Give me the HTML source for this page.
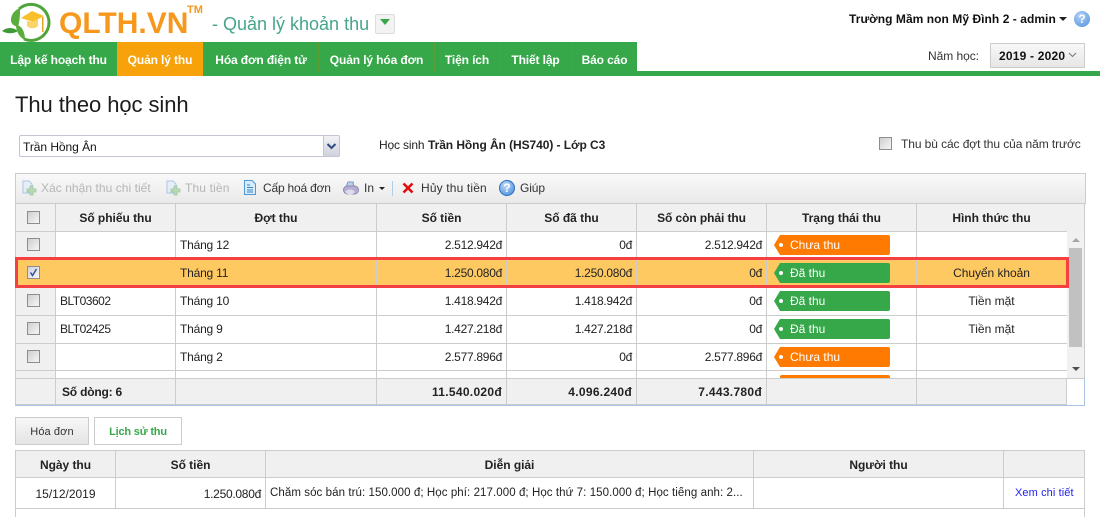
<!DOCTYPE html>
<html lang="vi"><head><meta charset="utf-8"><title>QLTH.VN</title>
<style>
html,body{margin:0;padding:0;width:1100px;height:517px;overflow:hidden;background:#fff}
body{position:relative;font:12px "Liberation Sans","DejaVu Sans",sans-serif;color:#222}
.a{position:absolute;white-space:nowrap}
.b{position:absolute}
.tab{position:absolute;top:42px;height:34px;line-height:36px;background:#36a84a;color:#fff;font-weight:bold;text-align:center;letter-spacing:-.12px}
.th{position:absolute;font-weight:bold;text-align:center;color:#222;letter-spacing:-.03px}
.n{position:absolute;text-align:center;color:#222;white-space:nowrap}
.r{position:absolute;text-align:right;letter-spacing:-.28px}
.f{position:absolute;text-align:right;font-weight:bold;letter-spacing:.3px}
.hl{position:absolute;height:1px;background:#ccc}
.vl{position:absolute;width:1px;background:#ccc}
.cb{position:absolute;left:27px;width:11px;height:11px;border:1px solid #8e8e8e;background:linear-gradient(135deg,#cfcfcf,#f6f6f6)}
.tag{position:absolute;left:780px;width:110px;height:20px;border-radius:0 2px 2px 0;color:#fff;line-height:20px}
.tag:before{content:"";position:absolute;left:-6px;top:0;border-right:6px solid;border-right-color:inherit;border-top:10px solid transparent;border-bottom:10px solid transparent}
.tag:after{content:"";position:absolute;left:-1px;top:8px;width:4px;height:4px;border-radius:50%;background:#fff}
.o{background:#ff7a00;border-color:#ff7a00}.g{background:#36a84a;border-color:#36a84a}
.tag span{position:absolute;left:10px}
.t{position:absolute;left:180px;letter-spacing:-.2px}
.c{position:absolute;left:60px;letter-spacing:-.5px}
</style></head><body>

<!-- logo -->
<svg class="b" style="left:0;top:0" width="60" height="44" viewBox="0 0 60 44">
<path d="M19 9A18 18 0 1 1 24 39" fill="none" stroke="#4fa53a" stroke-width="3"/>
<path d="M11 20C11 14 15 10 20 8C20 14 20 20 18 27C14 26 11 24 11 20Z" fill="#58ad3c"/>
<path d="M2 31C7 27 13 27 18 31C13 34 7 34 2 31Z" fill="#3f9a35"/>
<path d="M16 25C21 25 25 31 25 40C20 38 16 32 16 25Z" fill="#58ad3c"/>
<path d="M21 18L32 11L44 16L33 22Z" fill="#f8c02c"/>
<path d="M27 21V26C30 29 35 29 38 26V19L33 22Z" fill="#f9d469"/>
<rect x="42" y="17" width="1.500" height="15" fill="#e5a524"/>
</svg>
<div class="a" style="left:59px;top:7px;font-size:30px;line-height:34px;font-weight:bold;color:#f7981d">QLTH.VN</div>
<div class="a" style="left:187px;top:4px;font-size:11px;line-height:12px;font-weight:bold;color:#f7981d">TM</div>
<div class="a" style="left:212px;top:13px;font-size:18px;line-height:22px;color:#46a58c">- Quản lý khoản thu</div>
<div class="b" style="left:375px;top:14px;width:18px;height:18px;border:1px solid #ddd;border-radius:2px;background:#f3f3f3"></div>
<div class="b" style="left:380px;top:19px;border-top:6px solid #36a84a;border-left:5px solid transparent;border-right:5px solid transparent"></div>

<div class="a" style="left:849px;top:12px;line-height:14px;font-weight:bold;color:#111;letter-spacing:.05px">Trường Mầm non Mỹ Đình 2 - admin</div>
<div class="b" style="left:1059px;top:17px;border-top:4px solid #222;border-left:4px solid transparent;border-right:4px solid transparent"></div>
<div class="a" style="left:1074px;top:11px;width:16px;height:16px;border-radius:50%;background:radial-gradient(circle at 40% 30%,#b5d3f5,#4c8fdc);color:#fff;font-weight:bold;text-align:center;line-height:16px">?</div>

<!-- nav -->
<div class="b" style="left:0;top:71px;width:1100px;height:5px;background:#36a84a"></div>
<div class="b" style="left:0;top:42px;width:637px;height:30px;background:#5d9f33"></div>
<div class="tab" style="left:0;width:117px">Lập kế hoạch thu</div>
<div class="tab" style="left:117px;width:86px;background:#f7a20a">Quản lý thu</div>
<div class="tab" style="left:204px;width:114px">Hóa đơn điện tử</div>
<div class="tab" style="left:319px;width:115px">Quản lý hóa đơn</div>
<div class="tab" style="left:435px;width:64px">Tiện ích</div>
<div class="tab" style="left:500px;width:71px">Thiết lập</div>
<div class="tab" style="left:572px;width:65px">Báo cáo</div>

<div class="a" style="left:928px;top:49px;line-height:14px;color:#333;letter-spacing:-.05px">Năm học:</div>
<div class="b" style="left:990px;top:43px;width:93px;height:23px;border:1px solid #ccc;background:linear-gradient(#f8f8f8,#e6e6e6)"></div>
<div class="a" style="left:999px;top:49px;line-height:14px;font-weight:bold;color:#111;letter-spacing:.2px">2019 - 2020</div>
<svg class="b" style="left:1068px;top:52px" width="9" height="6"><path d="M1 1L4.500 4.500L8 1" fill="none" stroke="#777"/></svg>

<!-- title -->
<div class="a" style="left:15px;top:92px;font-size:22px;line-height:26px;color:#1c1c1c;letter-spacing:-.08px">Thu theo học sinh</div>

<div class="b" style="left:19px;top:135px;width:319px;height:20px;border:1px solid #c5c5d2;border-radius:2px"></div>
<div class="b" style="left:323px;top:136px;width:15px;height:20px;background:linear-gradient(#f2f2f6,#cfd2dc);border-left:1px solid #c5c5d2"></div>
<svg class="b" style="left:326px;top:143px" width="11" height="7"><path d="M1.500 1L5.500 5L9.500 1" fill="none" stroke="#2d4a80" stroke-width="2"/></svg>
<div class="a" style="left:23px;top:140px;line-height:14px;color:#111;letter-spacing:-.05px">Trần Hồng Ân</div>

<div class="a" style="left:379px;top:138px;line-height:14px;color:#222;letter-spacing:-.17px">Học sinh</div>
<div class="a" style="left:428px;top:138px;line-height:14px;color:#222;font-weight:bold;letter-spacing:-.07px">Trần Hồng Ân (HS740) - Lớp C3</div>
<div class="b" style="left:879px;top:137px;width:11px;height:11px;border:1px solid #8e8e8e;background:linear-gradient(135deg,#cfcfcf,#f6f6f6)"></div>
<div class="a" style="left:901px;top:137px;line-height:14px;letter-spacing:-.09px;color:#333">Thu bù các đợt thu của năm trước</div>

<!-- toolbar -->
<div class="b" style="left:15px;top:173px;width:1069px;height:30px;border:1px solid #ccc;border-bottom:0;background:linear-gradient(#f9f9f9,#e9e9e9)"></div>
<svg class="b" style="left:21px;top:180px;opacity:.55" width="16" height="16"><path d="M2 1H8L11 4V13H2Z" fill="#dcecfa" stroke="#6aa6dc"/><path d="M9 6H12V9H15V12H12V15H9V12H6V9H9Z" fill="#8bc98a" stroke="#5a9a5a" stroke-width=".7"/></svg>
<div class="a" style="left:41px;top:181px;line-height:14px;color:#b5b5b5;letter-spacing:.05px">Xác nhận thu chi tiết</div>
<svg class="b" style="left:165px;top:180px;opacity:.55" width="16" height="16"><path d="M2 1H8L11 4V13H2Z" fill="#dcecfa" stroke="#6aa6dc"/><path d="M9 6H12V9H15V12H12V15H9V12H6V9H9Z" fill="#8bc98a" stroke="#5a9a5a" stroke-width=".7"/></svg>
<div class="a" style="left:185px;top:181px;line-height:14px;color:#b5b5b5;letter-spacing:.15px">Thu tiền</div>
<svg class="b" style="left:243px;top:180px" width="14" height="16"><path d="M1.500 .5H9L12.500 4V14.500H1.500Z" fill="#d8ecfb" stroke="#4b9bdc"/><path d="M4 5H7M4 7.500H10M4 10H10M4 12H10" stroke="#3a86c8"/></svg>
<div class="a" style="left:263px;top:181px;line-height:14px;color:#333;letter-spacing:-.2px">Cấp hoá đơn</div>
<svg class="b" style="left:343px;top:181px" width="16" height="15"><path d="M3 6L5 1H10L11 6Z" fill="#b9d2ef" stroke="#7e96bc"/><rect x=".5" y="5" width="15" height="8" rx="4" fill="#b6aed2" stroke="#8c89ad"/><ellipse cx="7" cy="11" rx="4.500" ry="2.500" fill="#dcdcec"/></svg>
<div class="a" style="left:364px;top:181px;line-height:14px;color:#333">In</div>
<div class="b" style="left:379px;top:187px;border-top:3px solid #222;border-left:3px solid transparent;border-right:3px solid transparent"></div>
<div class="b" style="left:392px;top:181px;width:1px;height:15px;background:#aecde8"></div>
<svg class="b" style="left:402px;top:182px" width="12" height="12"><path d="M1.500 1.500L10.500 10.500M10.500 1.500L1.500 10.500" stroke="#e01010" stroke-width="2.600"/></svg>
<div class="a" style="left:421px;top:181px;line-height:14px;color:#333;letter-spacing:.15px">Hủy thu tiền</div>
<div class="a" style="left:499px;top:180px;width:14px;height:14px;border-radius:50%;border:1px solid #2a6fc0;background:radial-gradient(circle at 40% 30%,#c0dcf8,#3f86d8);color:#fff;font-weight:bold;text-align:center;line-height:14px">?</div>
<div class="a" style="left:520px;top:181px;line-height:14px;color:#333;letter-spacing:-.1px">Giúp</div>

<!-- grid bg -->
<div class="b" style="left:15px;top:204px;width:1070px;height:27px;background:#f0f0f0"></div>
<div class="b" style="left:15px;top:231px;width:40px;height:147px;background:#f0f0f0"></div>
<div class="b" style="left:15px;top:378px;width:1052px;height:27px;background:#f0f0f0"></div>
<!-- selected row -->
<div class="b" style="left:16px;top:259px;width:1053px;height:29px;background:#ffc961"></div>

<!-- lines -->
<div class="hl" style="left:15px;top:203px;width:1070px"></div>
<div class="hl" style="left:15px;top:231px;width:1052px"></div>
<div class="hl" style="left:15px;top:315px;width:1052px"></div>
<div class="hl" style="left:15px;top:343px;width:1052px"></div>
<div class="hl" style="left:15px;top:370px;width:1052px"></div>
<div class="hl" style="left:15px;top:378px;width:1070px"></div>
<div class="hl" style="left:15px;top:404px;width:1052px"></div>
<div class="hl" style="left:15px;top:405px;width:1070px;background:#a9c3e8"></div>
<div class="vl" style="left:15px;top:204px;height:201px"></div>
<div class="vl" style="left:1084px;top:204px;height:174px"></div>
<div class="vl" style="left:1084px;top:378px;height:27px;background:#a9c3e8"></div>
<div class="vl" style="left:55px;top:204px;height:201px"></div>
<div class="vl" style="left:175px;top:204px;height:201px"></div>
<div class="vl" style="left:376px;top:204px;height:201px"></div>
<div class="vl" style="left:506px;top:204px;height:201px"></div>
<div class="vl" style="left:636px;top:204px;height:201px"></div>
<div class="vl" style="left:766px;top:204px;height:201px"></div>
<div class="vl" style="left:916px;top:204px;height:201px"></div>
<div class="vl" style="left:1066px;top:378px;height:27px"></div>
<div class="hl" style="left:15px;top:287px;width:1052px"></div>

<!-- header -->
<div class="cb" style="top:211px"></div>
<div class="th" style="left:56px;width:119px;top:211px">Số phiếu thu</div>
<div class="th" style="left:176px;width:200px;top:211px">Đợt thu</div>
<div class="th" style="left:377px;width:129px;top:211px">Số tiền</div>
<div class="th" style="left:507px;width:129px;top:211px">Số đã thu</div>
<div class="th" style="left:637px;width:129px;top:211px;letter-spacing:-.08px">Số còn phải thu</div>
<div class="th" style="left:767px;width:149px;top:211px">Trạng thái thu</div>
<div class="th" style="left:917px;width:149px;top:211px">Hình thức thu</div>

<!-- rows -->
<div class="cb" style="top:238px"></div>
<div class="t" style="top:238px">Tháng 12</div>
<div class="r" style="left:377px;width:125px;top:238px">2.512.942đ</div>
<div class="r" style="left:507px;width:125px;top:238px">0đ</div>
<div class="r" style="left:637px;width:125px;top:238px">2.512.942đ</div>
<div class="tag o" style="top:235px"><span>Chưa thu</span></div>

<div class="cb" style="top:266px;background:linear-gradient(135deg,#d0d0dc,#f8f8f8)"></div>
<svg class="b" style="left:28px;top:267px" width="11" height="11"><path d="M2.500 5.500L4.500 8.500L8.500 2" fill="none" stroke="#3a4f9a" stroke-width="1.500"/></svg>
<div class="t" style="top:266px">Tháng 11</div>
<div class="r" style="left:377px;width:125px;top:266px">1.250.080đ</div>
<div class="r" style="left:507px;width:125px;top:266px">1.250.080đ</div>
<div class="r" style="left:637px;width:125px;top:266px">0đ</div>
<div class="tag g" style="top:263px"><span>Đã thu</span></div>
<div class="n" style="left:917px;width:149px;top:266px;letter-spacing:-.05px">Chuyển khoản</div>

<div class="cb" style="top:294px"></div>
<div class="c" style="top:294px">BLT03602</div>
<div class="t" style="top:294px">Tháng 10</div>
<div class="r" style="left:377px;width:125px;top:294px">1.418.942đ</div>
<div class="r" style="left:507px;width:125px;top:294px">1.418.942đ</div>
<div class="r" style="left:637px;width:125px;top:294px">0đ</div>
<div class="tag g" style="top:291px"><span>Đã thu</span></div>
<div class="n" style="left:917px;width:149px;top:294px">Tiền mặt</div>

<div class="cb" style="top:322px"></div>
<div class="c" style="top:322px">BLT02425</div>
<div class="t" style="top:322px">Tháng 9</div>
<div class="r" style="left:377px;width:125px;top:322px">1.427.218đ</div>
<div class="r" style="left:507px;width:125px;top:322px">1.427.218đ</div>
<div class="r" style="left:637px;width:125px;top:322px">0đ</div>
<div class="tag g" style="top:319px"><span>Đã thu</span></div>
<div class="n" style="left:917px;width:149px;top:322px">Tiền mặt</div>

<div class="cb" style="top:350px"></div>
<div class="t" style="top:350px">Tháng 2</div>
<div class="r" style="left:377px;width:125px;top:350px">2.577.896đ</div>
<div class="r" style="left:507px;width:125px;top:350px">0đ</div>
<div class="r" style="left:637px;width:125px;top:350px">2.577.896đ</div>
<div class="tag o" style="top:347px"><span>Chưa thu</span></div>
<div class="b" style="left:780px;top:375px;width:110px;height:3px;background:#ff7a00;border-radius:2px 2px 0 0"></div>

<!-- scrollbar -->
<div class="b" style="left:1067px;top:231px;width:17px;height:147px;background:#f1f1f1"></div>
<div class="b" style="left:1069px;top:248px;width:13px;height:99px;background:#c1c1c1"></div>
<div class="b" style="left:1072px;top:238px;border-bottom:4px solid #a5a5a5;border-left:4px solid transparent;border-right:4px solid transparent"></div>
<div class="b" style="left:1072px;top:367px;border-top:4px solid #505050;border-left:4px solid transparent;border-right:4px solid transparent"></div>

<!-- red selection frame -->
<div class="b" style="left:15px;top:257px;width:1048px;height:25px;border:3px solid #f44040"></div>

<!-- footer -->
<div class="a" style="left:62px;top:385px;font-weight:bold;letter-spacing:-.2px">Số dòng: 6</div>
<div class="f" style="left:377px;width:125px;top:385px">11.540.020đ</div>
<div class="f" style="left:507px;width:125px;top:385px">4.096.240đ</div>
<div class="f" style="left:637px;width:125px;top:385px">7.443.780đ</div>

<!-- sub tabs -->
<div class="b" style="left:15px;top:417px;width:72px;height:26px;border:1px solid #ccc;background:linear-gradient(#f7f7f7,#e4e4e4);text-align:center;line-height:28px;font-size:11px;color:#333;letter-spacing:.1px">Hóa đơn</div>
<div class="b" style="left:94px;top:417px;width:86px;height:26px;border:1px solid #ccc;background:#fff;text-align:center;line-height:28px;font-size:11px;font-weight:bold;color:#36a84a;letter-spacing:-.2px">Lịch sử thu</div>

<!-- lower table -->
<div class="b" style="left:15px;top:450px;width:1069px;height:27px;background:#f0f0f0"></div>
<div class="hl" style="left:15px;top:450px;width:1070px"></div>
<div class="hl" style="left:15px;top:477px;width:1070px"></div>
<div class="hl" style="left:15px;top:508px;width:1070px"></div>
<div class="vl" style="left:15px;top:450px;height:67px"></div>
<div class="vl" style="left:1084px;top:450px;height:67px"></div>
<div class="vl" style="left:115px;top:450px;height:58px"></div>
<div class="vl" style="left:265px;top:450px;height:58px"></div>
<div class="vl" style="left:753px;top:450px;height:58px"></div>
<div class="vl" style="left:1003px;top:450px;height:58px"></div>
<div class="th" style="left:16px;width:99px;top:458px">Ngày thu</div>
<div class="th" style="left:116px;width:149px;top:458px">Số tiền</div>
<div class="th" style="left:266px;width:487px;top:458px">Diễn giải</div>
<div class="th" style="left:754px;width:249px;top:458px">Người thu</div>
<div class="n" style="left:16px;width:99px;top:487px">15/12/2019</div>
<div class="r" style="left:116px;width:145px;top:487px">1.250.080đ</div>
<div class="a" style="left:270px;top:487px;width:480px;overflow:hidden;font-size:11.500px;letter-spacing:.075px">Chăm sóc bán trú: 150.000 đ; Học phí: 217.000 đ; Học thứ 7: 150.000 đ; Học tiếng anh: 2...</div>
<div class="a" style="left:1015px;top:487px;color:#2222ee;font-size:11px;letter-spacing:.1px">Xem chi tiết</div>
</body></html>
